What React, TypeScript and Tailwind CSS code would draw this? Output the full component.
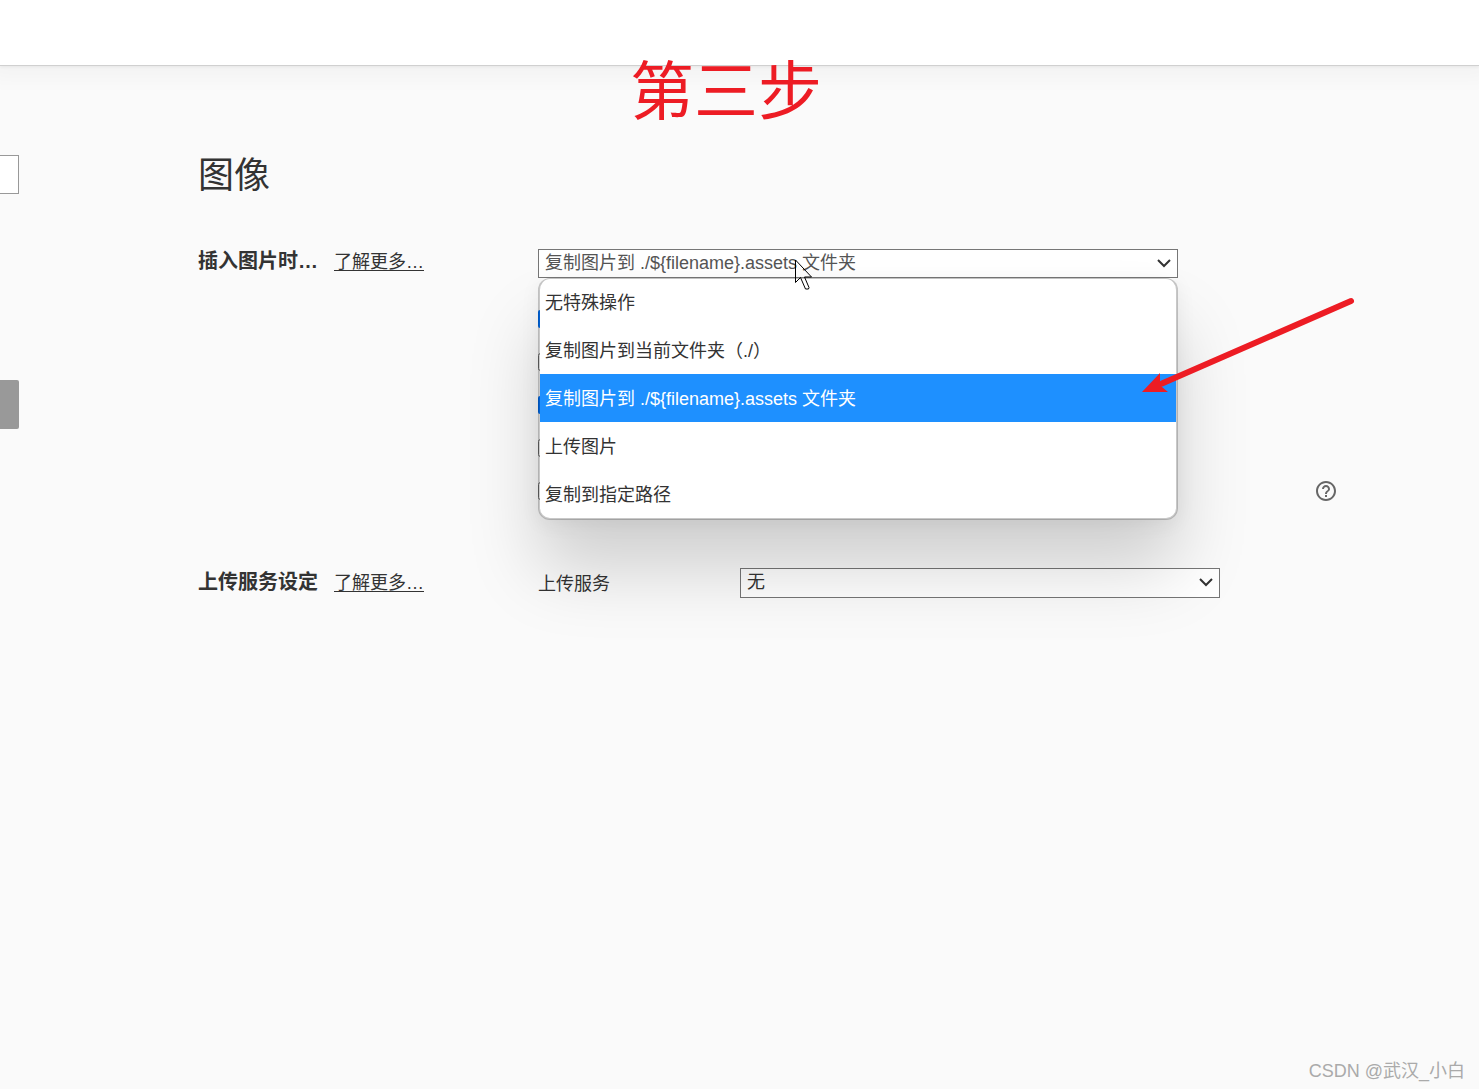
import type { ReactNode } from "react";
import { MdHelpOutline } from "react-icons/md";

const options = [
  "无特殊操作",
  "复制图片到当前文件夹（./）",
  "复制图片到 ./${filename}.assets 文件夹",
  "上传图片",
  "复制到指定路径",
];
const selected = 2;

const preferences = [
  { label: "对本地位置的图片应用上述规则", checked: true },
  { label: "对网络位置的图片应用上述规则", checked: false },
  { label: "优先使用相对路径", checked: true },
  { label: "为相对路径添加 ./", checked: false },
  { label: "插入时自动转义图片 URL", checked: false },
];

function Chevron() {
  return (
    <svg
      className="pointer-events-none absolute inset-y-0 right-1.5 my-1.5 h-4 w-4"
      viewBox="0 0 16 16"
      fill="none"
      stroke="#333"
      strokeWidth="2"
      aria-hidden="true"
    >
      <path d="M2 5l6 6 6-6" />
    </svg>
  );
}

function SettingRow({ title, children }: { title: string; children: ReactNode }) {
  return (
    <section className="flex">
      <div className="flex w-[340px] shrink-0 items-baseline gap-4 self-start leading-7">
        <h2 className="text-[20px] font-bold">{title}</h2>
        <a href="#more" className="underline underline-offset-2">
          了解更多…
        </a>
      </div>
      <div className="min-w-0 flex-1">{children}</div>
    </section>
  );
}

function Cursor() {
  return (
    <svg
      className="pointer-events-none absolute top-[10px] left-[257px] z-20 h-8 w-5"
      viewBox="0 0 20 32"
      fill="none"
      stroke="#000"
      aria-hidden="true"
    >
      <path d="M.5 1v22.500l5-5 5 11.500h3l.5-1.500-4.500-10.500h7z" />
    </svg>
  );
}

export default function App() {
  return (
    <div className="relative flex min-h-screen flex-col overflow-hidden bg-[#fafafa] font-['Liberation_Sans','Noto_Sans_CJK_SC',sans-serif] text-[18px] text-[#333]">
      <header className="h-[66px] shrink-0 border-b border-[#d0d0d0] bg-white shadow-[0_0_20px_12px_rgba(0,0,0,0.03),0_1px_3px_rgba(0,0,0,0.06)]" />

      <div className="flex flex-1">
        <aside className="w-[19px] shrink-0 pt-[89px]">
          <input
            aria-label="搜索"
            className="block h-[39px] w-full border border-l-0 border-[#999] bg-white"
          />
          <button
            type="button"
            aria-label="图像"
            className="mt-[186px] block h-[49px] w-full rounded-r-xs bg-[#999]"
          />
        </aside>

        <main className="min-w-0 flex-1 pt-[82px] pr-[141px] pl-[179px]">
          <h1 className="text-[36px] leading-[56px]">图像</h1>

          <div className="mt-[43px]">
            <SettingRow title="插入图片时…">
              <div className="relative mt-[2px] w-4/5">
                <select
                  aria-label="插入图片时"
                  defaultValue={options[selected]}
                  className="block h-[29px] w-full appearance-none border border-[#767676] bg-white px-1.5 pb-[2px] text-[#555]"
                >
                  {options.map((o) => (
                    <option key={o}>{o}</option>
                  ))}
                </select>
                <Chevron />
                <div
                  role="listbox"
                  aria-label="插入图片时"
                  className="absolute inset-x-0 top-full z-10 overflow-hidden rounded-xl border-2 border-t border-black/20 bg-white bg-clip-padding shadow-[0_50px_70px_rgba(0,0,0,0.17),0_4px_20px_rgba(0,0,0,0.06)]"
                >
                  {options.map((o, i) => (
                    <button
                      key={o}
                      type="button"
                      role="option"
                      aria-selected={i === selected}
                      className="block h-12 w-full px-[5px] pt-[2px] text-left first:h-[47px] aria-selected:bg-[#1e90ff] aria-selected:text-white"
                    >
                      {o}
                    </button>
                  ))}
                </div>
                <Cursor />
              </div>
              <div className="mt-[32px] flex flex-col gap-[25px]">
                {preferences.map((p, i) => (
                  <div key={p.label} className="flex h-[18px] items-center justify-between">
                    <input
                      type="checkbox"
                      aria-label={p.label}
                      defaultChecked={p.checked}
                      className="h-[18px] w-[18px] accent-[#0075ff]"
                    />
                    {i === preferences.length - 1 && (
                      <button type="button" aria-label="帮助" className="text-[#666]">
                        <MdHelpOutline size={24} />
                      </button>
                    )}
                  </div>
                ))}
              </div>
            </SettingRow>
          </div>

          <div className="mt-[68px]">
            <SettingRow title="上传服务设定">
              <div className="flex items-start">
                <label htmlFor="service" className="w-[202px] shrink-0 leading-[32px]">
                  上传服务
                </label>
                <div className="relative w-3/5">
                  <select
                    id="service"
                    className="block h-[30px] w-full appearance-none border border-[#767676] bg-white px-1.5 pb-[2px]"
                  >
                    <option>无</option>
                  </select>
                  <Chevron />
                </div>
              </div>
            </SettingRow>
          </div>
        </main>
      </div>

      <div className="pointer-events-none absolute top-[60px] left-[630px] z-20 text-[64px] leading-[64px] text-[#ed1c24]">
        第三步
      </div>

      <svg
        className="pointer-events-none absolute top-[290px] left-[1135px] z-20 h-[110px] w-[225px]"
        viewBox="1135 290 225 110"
        aria-hidden="true"
      >
        <path d="M1351 301L1162 383.500" stroke="#ed1c24" strokeWidth="6" strokeLinecap="round" />
        <path d="M1142 392l18-19v11l2 3 6 5z" fill="#ed1c24" />
      </svg>

      <footer className="absolute right-[14px] bottom-[5px] text-[18px] leading-[26px] text-[#aaa]">
        CSDN @武汉_小白
      </footer>
    </div>
  );
}
